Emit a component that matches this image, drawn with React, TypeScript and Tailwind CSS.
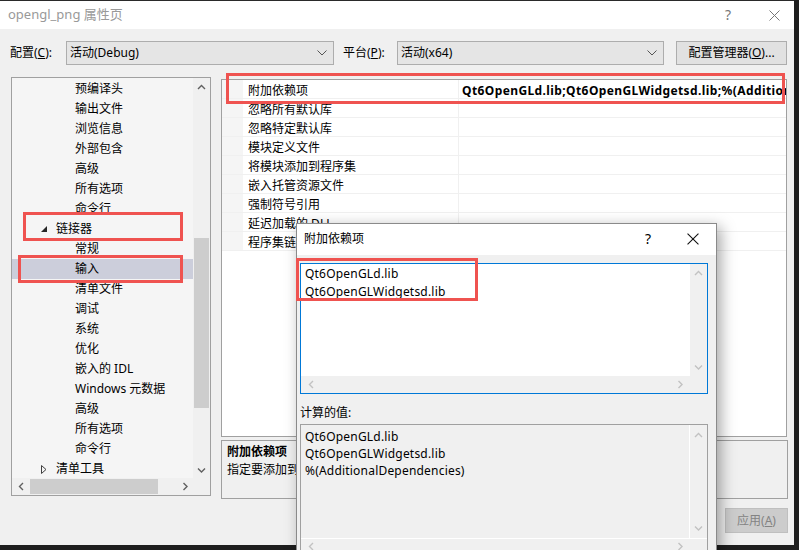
import React from "react";

type TreeItem = { label: string; level: 1 | 2; open?: boolean; selected?: boolean };

const TREE: TreeItem[] = [
  { label: "预编译头", level: 2 },
  { label: "输出文件", level: 2 },
  { label: "浏览信息", level: 2 },
  { label: "外部包含", level: 2 },
  { label: "高级", level: 2 },
  { label: "所有选项", level: 2 },
  { label: "命令行", level: 2 },
  { label: "链接器", level: 1, open: true },
  { label: "常规", level: 2 },
  { label: "输入", level: 2, selected: true },
  { label: "清单文件", level: 2 },
  { label: "调试", level: 2 },
  { label: "系统", level: 2 },
  { label: "优化", level: 2 },
  { label: "嵌入的 IDL", level: 2 },
  { label: "Windows 元数据", level: 2 },
  { label: "高级", level: 2 },
  { label: "所有选项", level: 2 },
  { label: "命令行", level: 2 },
  { label: "清单工具", level: 1, open: false },
];

const PROPS: { name: string; value?: string }[] = [
  { name: "附加依赖项", value: "Qt6OpenGLd.lib;Qt6OpenGLWidgetsd.lib;%(AdditionalDependencies)" },
  { name: "忽略所有默认库" },
  { name: "忽略特定默认库" },
  { name: "模块定义文件" },
  { name: "将模块添加到程序集" },
  { name: "嵌入托管资源文件" },
  { name: "强制符号引用" },
  { name: "延迟加载的 DLL" },
  { name: "程序集链接资源" },
];

const ARROWS = {
  up: "M1 5 L4.5 1.5 L8 5",
  down: "M1 1.5 L4.5 5 L8 1.5",
  left: "M5 1 L1.5 4.5 L5 8",
  right: "M1.5 1 L5 4.5 L1.5 8",
};

function ScrollArrow({ dir, color = "#606060" }: { dir: keyof typeof ARROWS; color?: string }) {
  const vertical = dir === "up" || dir === "down";
  return (
    <svg width={vertical ? 9 : 6} height={vertical ? 6 : 9} viewBox={vertical ? "0 0 9 6" : "0 0 6 9"}>
      <path d={ARROWS[dir]} fill="none" stroke={color} strokeWidth="1.4" />
    </svg>
  );
}

function Chevron() {
  return (
    <svg width="10" height="6" viewBox="0 0 10 6">
      <path d="M0.5 0.5 L5 5 L9.5 0.5" fill="none" stroke="#555" strokeWidth="1" />
    </svg>
  );
}

function CloseX({ color, size = 11 }: { color: string; size?: number }) {
  return (
    <svg width={size} height={size} viewBox="0 0 11 11">
      <path d="M0.5 0.5 L10.5 10.5 M10.5 0.5 L0.5 10.5" stroke={color} strokeWidth="1" />
    </svg>
  );
}

function Dropdown({ text, className }: { text: string; className: string }) {
  return (
    <div
      className={`flex h-[24px] items-center justify-between border border-[#adadad] bg-[#e5e5e5] pl-[3px] pr-[6px] ${className}`}
    >
      <span>{text}</span>
      <Chevron />
    </div>
  );
}

function Tree() {
  return (
    <div className="ml-[11px] flex h-[419px] w-[200px] flex-col border border-[#a0a0a0] bg-[#f5f5f5]">
      <div className="flex h-[400px]">
        <div className="flex-1 overflow-hidden pt-[1px]">
          {TREE.map((item, i) => (
            <div
              key={i}
              className={`flex h-[20px] items-center leading-[20px] ${item.selected ? "bg-[#cccedb]" : ""} ${
                item.level === 2 ? "pl-[63px]" : "pl-[29px]"
              }`}
            >
              {item.level === 1 && (
                <span className="mr-[9px] flex w-[6px] items-center">
                  {item.open ? (
                    <svg width="6" height="6" viewBox="0 0 6 6">
                      <polygon points="6,0 6,6 0,6" fill="#262626" />
                    </svg>
                  ) : (
                    <svg width="6" height="9" viewBox="0 0 6 9">
                      <polygon points="0.5,0.5 5,4.5 0.5,8.5" fill="none" stroke="#404040" strokeWidth="1" />
                    </svg>
                  )}
                </span>
              )}
              <span className="whitespace-nowrap">{item.label}</span>
            </div>
          ))}
        </div>
        {/* vertical scrollbar */}
        <div className="flex w-[17px] flex-col bg-[#f0f0f0]">
          <div className="flex h-[17px] items-center justify-center">
            <ScrollArrow dir="up" />
          </div>
          <div className="mx-[1px] mt-[143px] h-[170px] bg-[#cdcdcd]" />
          <div className="mt-auto flex h-[17px] items-center justify-center">
            <ScrollArrow dir="down" />
          </div>
        </div>
      </div>
      {/* horizontal scrollbar */}
      <div className="flex h-[17px]">
        <div className="flex flex-1 items-center bg-[#f0f0f0]">
          <div className="flex w-[17px] justify-center">
            <ScrollArrow dir="left" />
          </div>
          <div className="ml-[1px] h-[15px] w-[128px] bg-[#cdcdcd]" />
          <div className="ml-auto flex w-[17px] justify-center">
            <ScrollArrow dir="right" />
          </div>
        </div>
        <div className="w-[17px] bg-[#f0f0f0]" />
      </div>
    </div>
  );
}

function PropertyGrid() {
  return (
    <div className="mt-[2px] h-[358px] w-[566px] overflow-hidden border border-[#a0a0a0] bg-white">
      {PROPS.map((p) => (
        <div key={p.name} className="flex h-[19px] border-b border-[#f0f0f0] leading-[21px]">
          <div className="w-[21px] bg-[#f5f5f5]" />
          <div className="w-[215px] whitespace-nowrap pl-[5px]">{p.name}</div>
          <div className="flex-1 overflow-hidden whitespace-nowrap border-l border-[#f0f0f0] pl-[3px] font-bold tracking-[0.4px]">
            {p.value}
          </div>
        </div>
      ))}
    </div>
  );
}

function AddDepsDialog() {
  return (
    <div className="absolute left-[296px] top-[223px] flex h-[340px] w-[421px] flex-col border border-[#8a8a8a] bg-[#f0f0f0] shadow-[4px_4px_14px_rgba(0,0,0,0.35)]">
      <div className="flex h-[31px] items-center bg-white pl-[7px]">
        <span className="text-[12px]">附加依赖项</span>
        <span className="ml-auto mr-[36px] text-[14px] leading-none">?</span>
        <span className="mr-[17px] flex">
          <CloseX color="#111" size={12} />
        </span>
      </div>
      <div className="relative ml-[3px] mt-[8px] flex h-[133px] w-[408px] flex-col border border-[#0078d7] bg-white">
        <div className="flex flex-1">
          <div className="flex-1 pl-[4px] pt-[1px] leading-[18px] tracking-[0.2px]">
            <div>Qt6OpenGLd.lib</div>
            <div>Qt6OpenGLWidgetsd.lib</div>
          </div>
          <div className="flex w-[17px] flex-col items-center justify-between bg-[#f0f0f0] py-[6px]">
            <ScrollArrow dir="up" color="#c2c2c2" />
            <ScrollArrow dir="down" color="#c2c2c2" />
          </div>
        </div>
        <div className="flex h-[17px] items-center justify-between bg-[#f0f0f0] pl-[7px] pr-[24px]">
          <ScrollArrow dir="left" color="#c2c2c2" />
          <ScrollArrow dir="right" color="#c2c2c2" />
        </div>
      </div>
      <div className="ml-[3px] mt-[10px] h-[18px] leading-[18px]">计算的值:</div>
      <div className="ml-[3px] mt-[2px] flex h-[140px] w-[408px] flex-col border border-[#a0a0a0] bg-[#f0f0f0]">
        <div className="flex h-[113px]">
          <div className="flex-1 pl-[4px] pt-[3px] leading-[17px] tracking-[0.2px]">
            <div>Qt6OpenGLd.lib</div>
            <div>Qt6OpenGLWidgetsd.lib</div>
            <div>%(AdditionalDependencies)</div>
          </div>
          <div className="flex w-[18px] flex-col items-center justify-between border-l border-white py-[7px]">
            <ScrollArrow dir="up" color="#c2c2c2" />
            <ScrollArrow dir="down" color="#c2c2c2" />
          </div>
        </div>
        <div className="flex h-[17px] items-center justify-between border-t border-white pl-[7px] pr-[24px]">
          <ScrollArrow dir="left" color="#c2c2c2" />
          <ScrollArrow dir="right" color="#c2c2c2" />
        </div>
      </div>
      {/* annotation */}
      <div className="absolute left-[-1px] top-[34px] h-[43px] w-[182px] border-[3px] border-[#ef5350]" />
    </div>
  );
}

export default function App() {
  return (
    <div className="relative h-[550px] w-[799px] overflow-hidden bg-[#1e1e1e] font-['Noto_Sans','Noto_Sans_CJK_SC',sans-serif] text-[12px] text-black">
      <div className="flex h-[545px] w-[794px] flex-col border-t border-[#2a2a2a] bg-[#f0f0f0]">
        {/* title bar */}
        <div className="flex h-[28px] items-center bg-white pl-[8px]">
          <span className="text-[13px] text-[#999]">opengl_png 属性页</span>
          <span className="ml-auto mr-[38px] text-[14px] leading-none text-[#777]">?</span>
          <span className="mr-[14px] flex">
            <CloseX color="#777" />
          </span>
        </div>

        {/* configuration row */}
        <div className="mt-[12px] flex h-[24px] items-center">
          <span className="w-[66px] shrink-0 pl-[10px]">
            配置(<span className="underline">C</span>):
          </span>
          <Dropdown text="活动(Debug)" className="w-[268px] shrink-0" />
          <span className="ml-[9px] w-[54px] shrink-0">
            平台(<span className="underline">P</span>):
          </span>
          <Dropdown text="活动(x64)" className="w-[267px] shrink-0" />
          <div className="ml-[12px] flex h-[24px] w-[111px] shrink-0 items-center justify-center border border-[#adadad] bg-[#e1e1e1]">
            配置管理器(<span className="underline">O</span>)...
          </div>
        </div>

        <div className="mt-[12px] flex">
          <Tree />
          <div className="ml-[10px] flex flex-col">
            <PropertyGrid />
            <div className="mt-[3px] h-[59px] w-[567px] border border-[#a0a0a0] bg-[#f0f0f0] px-[5px] pt-[2px] leading-[18px]">
              <div className="font-bold">附加依赖项</div>
              <div>指定要添加到链接命令行的附加项。[例如 kernel32.lib]</div>
            </div>
            <div className="mt-[9px] flex justify-end">
              <div className="flex h-[25px] w-[63px] items-center justify-center border border-[#bfbfbf] bg-[#cccccc] text-[#838383]">
                应用(<span className="underline">A</span>)
              </div>
            </div>
          </div>
        </div>
      </div>

      <AddDepsDialog />

      {/* annotations */}
      <div className="absolute left-[226px] top-[73px] h-[31px] w-[559px] border-[3px] border-[#ef5350]" />
      <div className="absolute left-[23px] top-[212px] h-[29px] w-[160px] border-[3px] border-[#ef5350]" />
      <div className="absolute left-[18px] top-[255px] h-[28px] w-[165px] border-[3px] border-[#ef5350]" />
    </div>
  );
}
